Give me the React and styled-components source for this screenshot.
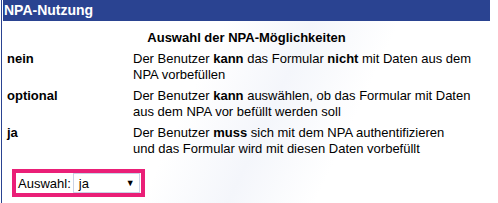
import styled, { createGlobalStyle } from "styled-components";

const GlobalStyle = createGlobalStyle`
  html, body {
    margin: 0;
    padding: 0;
    background: #fff;
  }
  body {
    font-family: "Liberation Sans", Arial, sans-serif;
    color: #000;
  }
`;

const Wrapper = styled.section`
  width: 489px;
  height: 203px;
  margin-left: 1px;
  padding-left: 1px;
  border-left: 1px solid #2a4391;
  box-sizing: border-box;
  background:
    linear-gradient(115deg, #ffffff 0%, #ffffff 40%, #f4f6fb 55%, #ffffff 70%, #ffffff 100%);
`;

const Header = styled.div`
  height: 21px;
  background: #2a4391;
  color: #fff;
  font-weight: bold;
  font-size: 14px;
  line-height: 20px;
  padding-left: 1px;
`;

const Title = styled.div`
  text-align: center;
  font-weight: bold;
  font-size: 13px;
  line-height: 16px;
  padding-top: 9px;
  padding-bottom: 5px;
`;

const Options = styled.div`
  display: grid;
  grid-template-columns: 126px 1fr;
  row-gap: 5px;
  padding-left: 4px;
  font-size: 13px;
  line-height: 16px;
`;

const Label = styled.div`
  font-weight: bold;
`;

const Desc = styled.div`
  b {
    font-weight: bold;
  }
`;

const Picker = styled.div`
  display: inline-flex;
  align-items: center;
  gap: 2px;
  margin: 12px 0 0 9px;
  padding: 0 1px 0 2px;
  height: 20px;
  border: 4px solid #ea1f77;
  font-size: 13px;
`;

const FakeSelect = styled.div`
  display: flex;
  align-items: center;
  justify-content: space-between;
  width: 56px;
  height: 18px;
  padding: 0 4px 0 5px;
  border: 1px solid #c9d3e6;
  background: #fff;
  font-size: 13px;

  span:last-child {
    font-size: 9px;
  }
`;

const App = () => {
  return (
    <>
      <GlobalStyle />
      <Wrapper>
        <Header>NPA-Nutzung</Header>
        <Title>Auswahl der NPA-Möglichkeiten</Title>
        <Options>
          <Label>nein</Label>
          <Desc>
            Der Benutzer <b>kann</b> das Formular <b>nicht</b> mit Daten aus dem
            <br />
            NPA vorbefüllen
          </Desc>
          <Label>optional</Label>
          <Desc>
            Der Benutzer <b>kann</b> auswählen, ob das Formular mit Daten
            <br />
            aus dem NPA vor befüllt werden soll
          </Desc>
          <Label>ja</Label>
          <Desc>
            Der Benutzer <b>muss</b> sich mit dem NPA authentifizieren
            <br />
            und das Formular wird mit diesen Daten vorbefüllt
          </Desc>
        </Options>
        <Picker>
          <span>Auswahl:</span>
          <FakeSelect>
            <span>ja</span>
            <span>▼</span>
          </FakeSelect>
        </Picker>
      </Wrapper>
    </>
  );
};

export default App;
